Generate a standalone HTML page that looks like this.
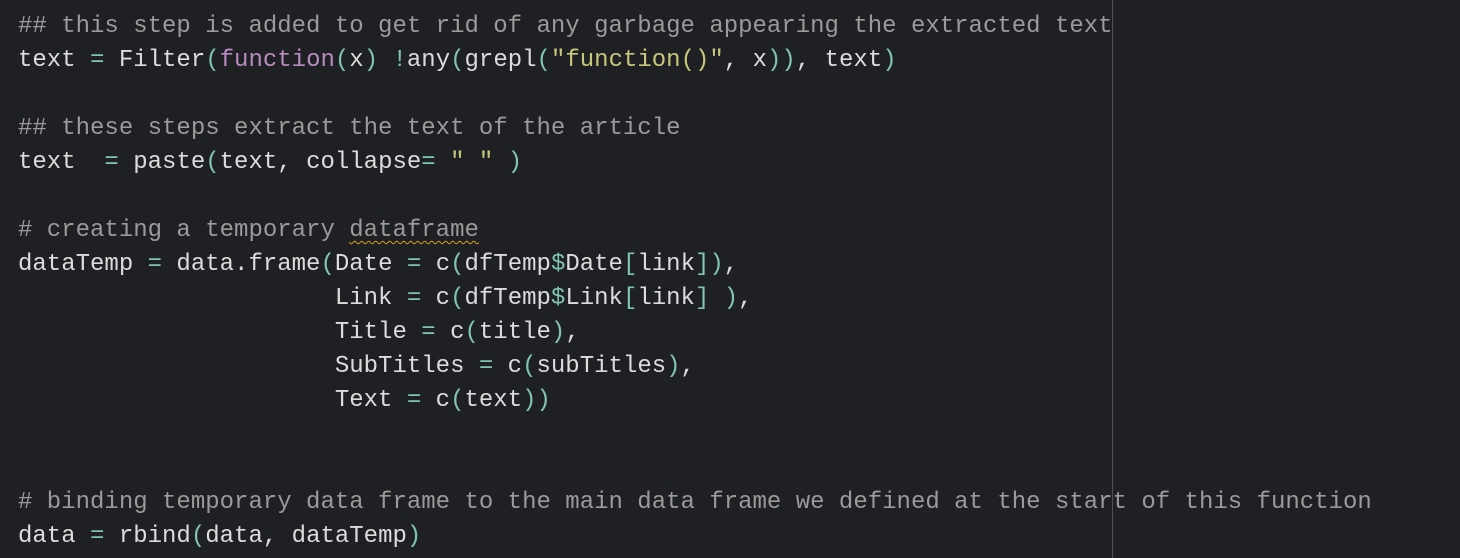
<!DOCTYPE html>
<html><head><meta charset="utf-8"><style>
html,body{margin:0;padding:0;background:#1f2023;width:1460px;height:558px;overflow:hidden}
pre{margin:0;position:absolute;left:18px;top:10px;font-family:"Liberation Mono","DejaVu Sans Mono",monospace;font-size:24px;line-height:34px;color:#dcdcdc}
.c{color:#9a9a9a}.o{color:#7fc4b4}.k{color:#b98bc1}.s{color:#c6c77a}
.u{text-decoration:underline wavy #d8a020;text-underline-offset:4px;text-decoration-thickness:1px}
.vl{position:absolute;left:1112px;top:0;width:1px;height:558px;background:#4e5054}
</style></head><body>
<div class="vl"></div>
<pre><span class="c">## this step is added to get rid of any garbage appearing the extracted text</span>
text <span class="o">=</span> Filter<span class="o">(</span><span class="k">function</span><span class="o">(</span>x<span class="o">)</span> <span class="o">!</span>any<span class="o">(</span>grepl<span class="o">(</span><span class="s">"function()"</span>, x<span class="o">))</span>, text<span class="o">)</span>

<span class="c">## these steps extract the text of the article</span>
text  <span class="o">=</span> paste<span class="o">(</span>text, collapse<span class="o">=</span> <span class="s">" "</span> <span class="o">)</span>

<span class="c"># creating a temporary <span class="u">dataframe</span></span>
dataTemp <span class="o">=</span> data.frame<span class="o">(</span>Date <span class="o">=</span> c<span class="o">(</span>dfTemp<span class="o">$</span>Date<span class="o">[</span>link<span class="o">])</span>,
                      Link <span class="o">=</span> c<span class="o">(</span>dfTemp<span class="o">$</span>Link<span class="o">[</span>link<span class="o">]</span> <span class="o">)</span>,
                      Title <span class="o">=</span> c<span class="o">(</span>title<span class="o">)</span>,
                      SubTitles <span class="o">=</span> c<span class="o">(</span>subTitles<span class="o">)</span>,
                      Text <span class="o">=</span> c<span class="o">(</span>text<span class="o">))</span>


<span class="c"># binding temporary data frame to the main data frame we defined at the start of this function</span>
data <span class="o">=</span> rbind<span class="o">(</span>data, dataTemp<span class="o">)</span></pre>
</body></html>
